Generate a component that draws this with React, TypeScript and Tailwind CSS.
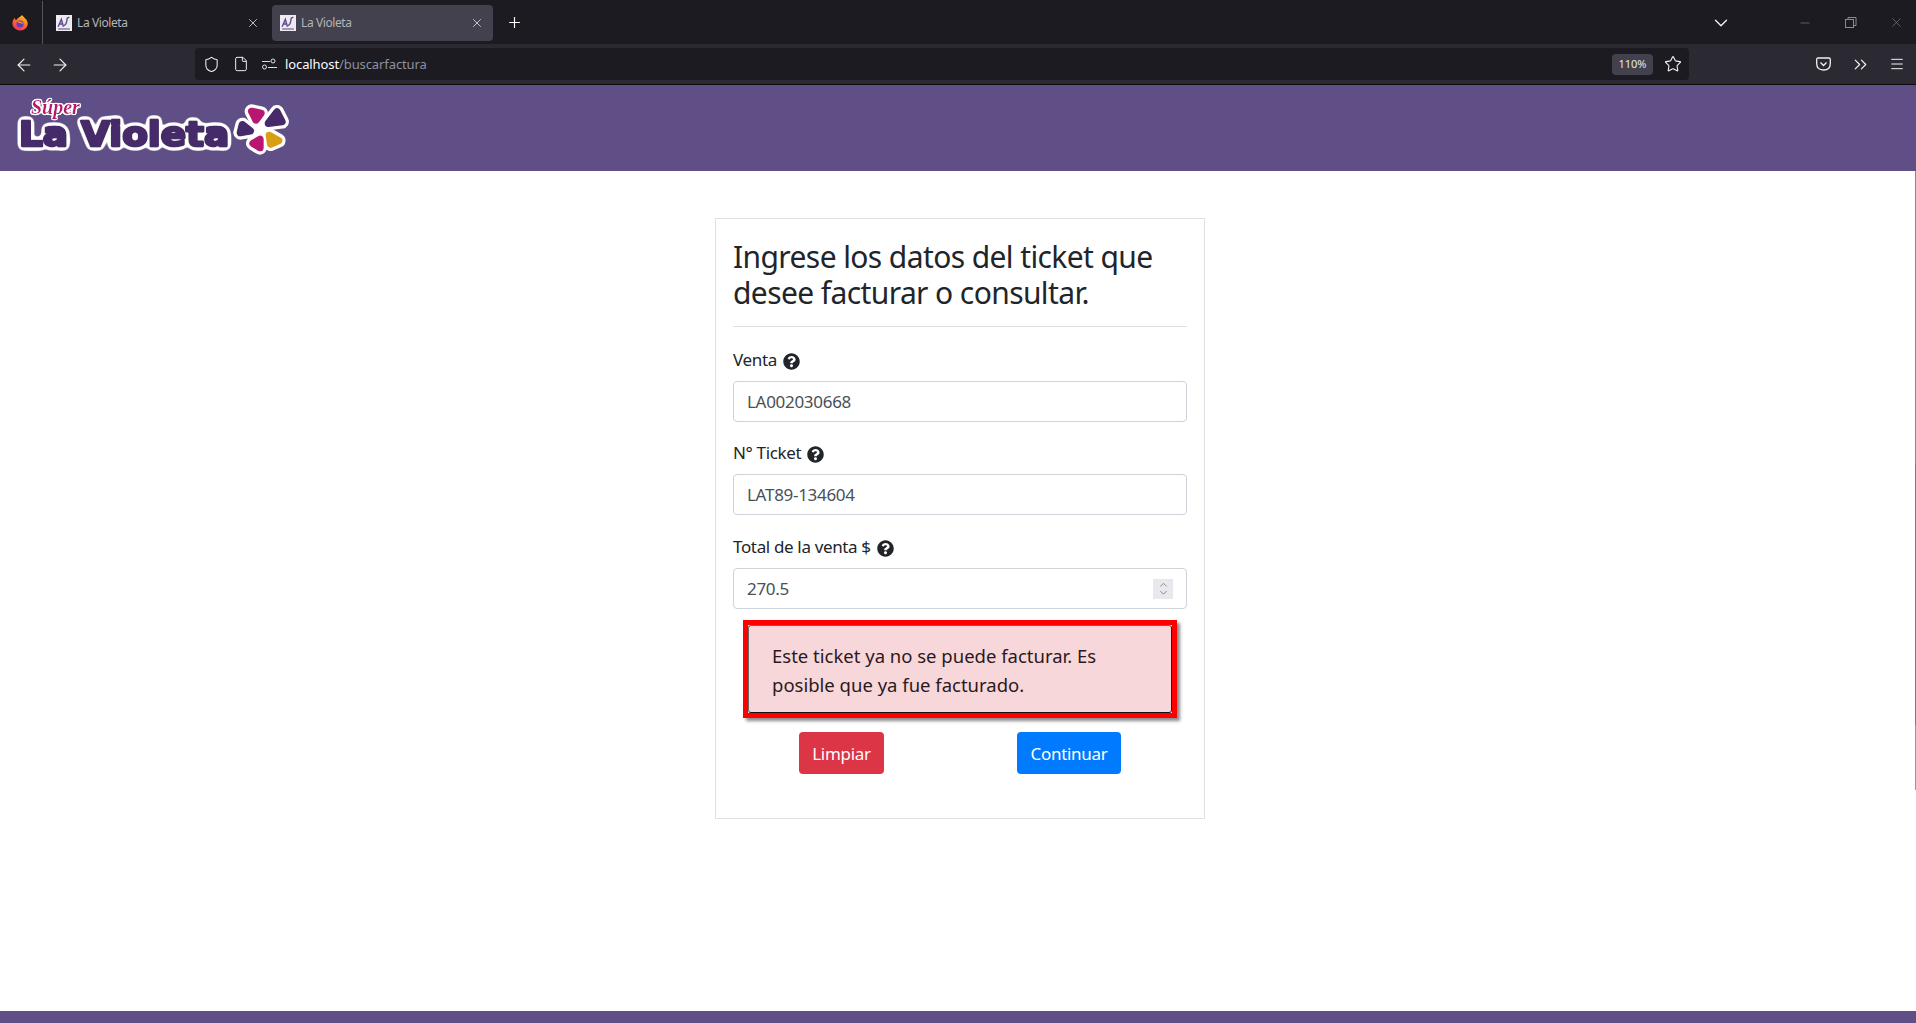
import React from "react";
import { X, Plus, ArrowLeft, ArrowRight, Shield, File, ChevronDown, Minus, Star, ChevronsRight, Menu, ChevronUp } from "lucide-react";
import { FaQuestionCircle } from "react-icons/fa";

const Favicon = () => (
  <svg width="16" height="16" viewBox="0 0 15 15" className="shrink-0">
    <rect width="15" height="15" fill="#eeeaf2" />
    <path d="M2 11 L5 4 L7 11 M3.5 8.5 H6.5" stroke="#5a4a8a" strokeWidth="1.3" fill="none" />
    <path d="M7.5 10 Q10 9 10.5 3 L12.5 2" stroke="#5a4a8a" strokeWidth="1.3" fill="none" />
    <rect x="2" y="12.5" width="11" height="1.2" fill="#7a6a9a" />
  </svg>
);

const Tab = ({ active }: { active?: boolean }) => (
  <div className={`flex items-center h-9 rounded pl-2 pr-[9px] ${active ? "w-[221px] bg-[#42414d]" : "w-[224px] pr-[12px]"}`}>
    <Favicon />
    <span className="ml-[5px] text-[12px] tracking-[-0.4px] text-[#b4b4ba] flex-1">La Violeta</span>
    <X size={14} strokeWidth={1.4} className="text-[#e2e2e6]" />
  </div>
);

const HelpIcon = () => <FaQuestionCircle size={17} color="#212529" className="inline-block ml-[6px] align-[-4px]" />;

const Field = ({ label, value, spin, className }: { label: string; value: string; spin?: boolean; className: string }) => (
  <div className={className}>
    <label className="block mb-[9px] text-[#212529] text-[17px] tracking-[-0.35px] leading-[28px] h-[26px]">
      {label}
      <HelpIcon />
    </label>
    <div className="flex items-center justify-between h-[41px] border border-[#ced4da] rounded-[4px] pl-[13px] pr-[13px] text-[17px] tracking-[-0.3px] text-[#495057] bg-white">
      <span>{value}</span>
      {spin && (
        <span className="flex flex-col items-center justify-center w-5 h-[20px] bg-[#e9e9ed] text-[#85858b]">
          <ChevronUp size={13} strokeWidth={2} className="-mb-[3px]" />
          <ChevronDown size={13} strokeWidth={2} />
        </span>
      )}
    </div>
  </div>
);

const petals = [
  { points: "215,64 243,70 228,90", color: "#b9166f" },
  { points: "291,66 306,95 265,100", color: "#462a69" },
  { points: "268,136 296,152 272,162", color: "#d99e14" },
  { points: "240,148 240,173 219,160", color: "#b9166f" },
  { points: "187,104 211,123 181,128", color: "#462a69" },
];

const OutlineFilter = ({ id, blur }: { id: string; blur: string }) => (
  <filter id={id} x="-10%" y="-30%" width="120%" height="160%">
    <feGaussianBlur in="SourceAlpha" stdDeviation={blur} result="b" />
    <feComponentTransfer in="b" result="d">
      <feFuncA type="linear" slope="12" intercept="-0.6" />
    </feComponentTransfer>
    <feFlood floodColor="#ffffff" />
    <feComposite in2="d" operator="in" result="w" />
    <feMerge>
      <feMergeNode in="w" />
      <feMergeNode in="SourceGraphic" />
    </feMerge>
  </filter>
);

const Logo = () => (
  <svg width="290" height="74" viewBox="0 0 290 74" className="block">
    <defs>
      <OutlineFilter id="outline-lg" blur="2.4" />
      <OutlineFilter id="outline-sm" blur="1.2" />
    </defs>
    <g filter="url(#outline-lg)">
      <text
        transform="translate(5,53) scale(1.1,1)"
        fontFamily="'DejaVu Sans', sans-serif"
        fontWeight="700"
        fontSize="34"
        fill="#462a69"
        stroke="#462a69"
        strokeWidth="2.8"
        strokeLinejoin="round"
      >
        La Violeta
      </text>
    </g>
    <g filter="url(#outline-sm)">
      <text x="17" y="21" fontFamily="'Liberation Serif', serif" fontStyle="italic" fontWeight="700" fontSize="20" fill="#b9166f">
        Súper
      </text>
    </g>
    <g transform="translate(166,-3) scale(0.3333)">
      {petals.map((p, i) => (
        <polygon key={i} points={p.points} fill="#fff" stroke="#fff" strokeWidth="42" strokeLinejoin="round" />
      ))}
      <circle cx="240" cy="120" r="26" fill="#fff" />
      {petals.map((p, i) => (
        <polygon key={i} points={p.points} fill={p.color} stroke={p.color} strokeWidth="22" strokeLinejoin="round" />
      ))}
    </g>
  </svg>
);

export default function App() {
  return (
    <div className="flex flex-col h-[1023px] overflow-hidden bg-white font-['Noto_Sans',sans-serif]">
      {/* tab strip */}
      <div className="flex items-center h-11 shrink-0 bg-[#1c1b22] pt-[1px]">
        <div className="flex items-center justify-center w-[43px] h-full border-r border-[#55545c] pr-[3px]">
          <svg width="16" height="17" viewBox="0 0 16 17">
            <defs>
              <linearGradient id="ff" x1="0.7" y1="0" x2="0.2" y2="1">
                <stop offset="0" stopColor="#ffc21f" />
                <stop offset="0.5" stopColor="#ff6a2b" />
                <stop offset="1" stopColor="#ee2a6b" />
              </linearGradient>
            </defs>
            <path d="M10 1 C11 3 15.800 5 15.800 10 A7.700 7 0 1 1 0.600 8 C1 6 2 4.500 3 4 C3 5 3.500 6 4 6.500 C5 4 8 3.500 10 1Z" fill="url(#ff)" />
            <circle cx="8" cy="10" r="3.600" fill="#6a3bb8" />
            <path d="M5 8 C7 7 10 7.500 11 10 C9 9 7 9 5 8Z" fill="#ffa436" />
          </svg>
        </div>
        <div className="ml-[5px] flex items-center">
          <Tab />
          <Tab active />
        </div>
        <Plus size={17} strokeWidth={1.6} className="ml-[13px] text-white" />
        <div className="flex-1" />
        <ChevronDown size={22} strokeWidth={1.5} className="text-[#f0f0f2] mr-[66px]" />
        <Minus size={14} strokeWidth={1} className="text-[#8a8a90] mr-[33px]" />
        <svg width="12" height="12" viewBox="0 0 12 12" fill="none" stroke="#8a8a90" className="mr-[32px]">
          <rect x="0.500" y="2.500" width="8" height="8" />
          <path d="M3 2.500 V0.500 H11 V8.500 H8.500" />
        </svg>
        <X size={15} strokeWidth={1} className="text-[#8a8a90] mr-[12px]" />
      </div>
      {/* nav bar */}
      <div className="flex items-center h-10 shrink-0 bg-[#2b2a33] border-b border-[#0c0c0d] box-content">
        <ArrowLeft size={20} strokeWidth={1.4} className="ml-[14px] mt-[1px] text-[#f0f0f2]" />
        <ArrowRight size={20} strokeWidth={1.4} className="ml-[16px] mt-[1px] text-[#f0f0f2]" />
        <div className="ml-[125px] flex items-center h-8 w-[1494px] rounded bg-[#1c1b22]">
          <Shield size={17} strokeWidth={1.5} className="ml-[8px] text-[#f0f0f2]" />
          <File size={16} strokeWidth={1.5} className="ml-[13px] text-[#f0f0f2]" />
          <svg width="15" height="12" viewBox="0 0 15 12" fill="none" stroke="#e0e0e4" className="ml-[13px]">
            <path d="M0 3.500 H8 M6 9.500 H15" />
            <circle cx="11" cy="3" r="2" />
            <circle cx="2.500" cy="9" r="2" />
          </svg>
          <span className="ml-[8px] mt-[2px] text-[13px] tracking-[-0.1px] text-[#fbfbfe]">localhost<span className="text-[#8f8f9d]">/buscarfactura</span></span>
          <div className="flex-1" />
          <span className="flex items-center justify-center w-[41px] h-[21px] rounded bg-[#42414d] text-[11px] text-[#e8e8ee]">110%</span>
          <Star size={18} strokeWidth={1.5} className="ml-[11px] mr-[7px] text-[#f0f0f2]" />
        </div>
        <div className="flex-1" />
        <svg width="15" height="14" viewBox="0 0 15 14" fill="none" stroke="#f0f0f2" strokeWidth="1.300" className="mr-[19px]">
          <path d="M2 1 H13 Q14.300 1 14.300 2.500 V6.500 Q14.300 13 7.500 13 Q0.700 13 0.700 6.500 V2.500 Q0.700 1 2 1Z" />
          <path d="M4.500 5.500 L7.500 8.500 L10.500 5.500" />
        </svg>
        <ChevronsRight size={21} strokeWidth={1.4} className="mr-[18px] text-[#f0f0f2]" />
        <Menu size={16} strokeWidth={1.5} className="mr-[11px] text-[#f0f0f2]" />
      </div>
      {/* site header */}
      <header className="h-[86px] shrink-0 bg-[#604e86] pl-[14px] pt-[8px]">
        <Logo />
      </header>
      {/* content */}
      <main className="relative flex-1 flex justify-center pt-[47px] bg-white text-[17.6px]">
        <div className="self-start w-[490px] h-[601px] border border-[#dfe0e4] px-[17px] pt-[20px] ml-[4px]">
          <h1 className="text-[30px] leading-[36px] text-[#212529] tracking-[-0.6px] pb-[15px] border-b border-[#e0e0e3] mb-[19px]">
            Ingrese los datos del ticket que desee facturar o consultar.
          </h1>
          <Field className="mb-[17px]" label="Venta" value="LA002030668" />
          <Field className="mb-[18px]" label="N° Ticket" value="LAT89-134604" />
          <Field className="mb-[11px]" label="Total de la venta $" value="270.5" spin />
          <div className="mx-[10px] border-[5px] border-[#ff0000] shadow-[3px_3px_3px_rgba(0,0,0,0.45)]">
            <div className="h-[88px] rounded-[3px] border border-t-[#666] border-l-[#666] border-r-[#222] border-b-[#111] bg-[#f8d7da] pl-[23px] pr-[30px] pt-[15px] text-[18.5px] leading-[29px] text-[#2a1a1c]">
              Este ticket ya no se puede facturar. Es posible que ya fue facturado.
            </div>
          </div>
          <div className="flex mt-[14px] text-[17px] tracking-[-0.3px]">
            <button className="ml-[66px] h-[42px] w-[85px] rounded-[4px] bg-[#dc3545] pt-[1px] text-white">Limpiar</button>
            <button className="ml-[133px] h-[42px] w-[104px] rounded-[4px] bg-[#007bff] pt-[1px] text-white">Continuar</button>
          </div>
        </div>
        <div className="absolute right-0 top-0 flex flex-col w-[1px] h-[619px]">
          <div className="h-[294px] bg-[#8a8a8a]" />
          <div className="h-[260px] bg-[#6e8090]" />
          <div className="h-[65px] bg-[#999999]" />
        </div>
      </main>
      <footer className="h-3 shrink-0 bg-[#604e86]" />
    </div>
  );
}
